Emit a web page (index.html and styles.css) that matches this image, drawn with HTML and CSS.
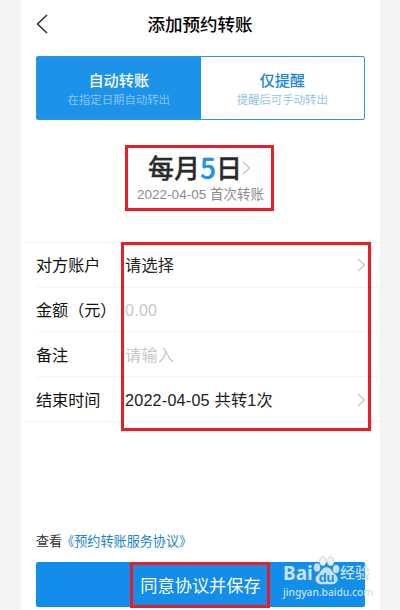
FILE: index.html
```
<!DOCTYPE html>
<html lang="zh-CN">
  <head>
    <meta charset="utf-8">
    <title>添加预约转账</title>
    <link rel="stylesheet" href="styles.css">
  </head>
  <body>
    <div class="phone">
      <header class="header">
        <svg class="back" width="12" height="20" viewBox="0 0 12 20"><path d="M11 1L1.5 10L11 19"/></svg>
        <h1 class="title">添加预约转账</h1>
      </header>
      <div class="tabs">
        <div class="tab selected">
          <div class="tab-name">自动转账</div>
          <div class="tab-desc">在指定日期自动转出</div>
        </div>
        <div class="tab">
          <div class="tab-name">仅提醒</div>
          <div class="tab-desc">提醒后可手动转出</div>
        </div>
      </div>
      <div class="date">
        <div class="day">每月<span class="num">5</span>日<svg class="arrow" width="9" height="14" viewBox="0 0 9 14"><path d="M1 1L7.5 7L1 13"/></svg></div>
        <div class="first">2022-04-05 首次转账</div>
      </div>
      <div class="form">
        <div class="row">
          <div class="label">对方账户</div>
          <div class="value">请选择</div>
          <svg class="arrow" width="9" height="14" viewBox="0 0 9 14"><path d="M1 1L7.5 7L1 13"/></svg>
        </div>
        <div class="row">
          <div class="label">金额（元）</div>
          <div class="value empty">0.00</div>
        </div>
        <div class="row">
          <div class="label">备注</div>
          <div class="value empty">请输入</div>
        </div>
        <div class="row">
          <div class="label">结束时间</div>
          <div class="value">2022-04-05 共转1次</div>
          <svg class="arrow" width="9" height="14" viewBox="0 0 9 14"><path d="M1 1L7.5 7L1 13"/></svg>
        </div>
      </div>
      <div class="agreement">查看<span class="link">《预约转账服务协议》</span></div>
      <div class="save">同意协议并保存</div>
    </div>

    <div class="mark mark-date"></div>
    <div class="mark mark-form"></div>
    <div class="mark mark-save"></div>

    <div class="watermark">
      <div class="logo">
        <span class="bai">Bai</span>
        <svg class="paw" width="27" height="30" viewBox="0 0 27 30">
          <ellipse cx="4" cy="12.5" rx="3" ry="4"/>
          <ellipse class="light" cx="9.8" cy="6" rx="3.1" ry="4.4"/>
          <ellipse class="light" cx="17.6" cy="6.2" rx="3.1" ry="4.4"/>
          <ellipse cx="23.1" cy="14" rx="3" ry="4"/>
          <path d="M13.5 12.5C17.5 12.5 18.5 16 21 18.5C23.5 20.7 25 22.5 24.2 25.5C23.3 29 20 29.3 13.5 29C7.5 29.3 4 29 3 25.5C2.2 22.3 4 20.5 6.3 18.3C8.5 16 9.5 12.5 13.5 12.5Z"/>
          <text x="13.6" y="27">du</text>
        </svg>
        <span class="jingyan">经验</span>
      </div>
      <div class="site">jingyan.baidu.com</div>
    </div>
  </body>
</html>
```
FILE: styles.css
```
*{
  box-sizing: border-box;
}
body{
  position: relative;
  width: 400px;
  height: 610px;
  margin: 0;
  overflow: hidden;
  background-color: #f4f4f4;
  color: #111;
  font-family: "Liberation Sans", "Noto Sans CJK SC", sans-serif;
}
.phone{
  display: flex;
  flex-direction: column;
  width: 359px;
  height: 610px;
  margin-left: 21px;
  background-color: #fff;
}
.header{
  display: flex;
  align-items: center;
  height: 48px;
  padding: 0 15px;
}
.back{
  fill: none;
  stroke: #222;
  stroke-width: 1.4;
}
.title{
  flex: 1;
  margin: 0 13px 0 0;
  padding-top: 1px;
  font-size: 17.5px;
  font-weight: 500;
  line-height: 24px;
  text-align: center;
  color: #000;
}
.tabs{
  display: flex;
  height: 64px;
  margin: 8px 15px 0;
  border: 1px solid #2f95d9;
  border-radius: 2px;
}
.tab{
  flex: 1;
  padding-top: 14px;
  text-align: center;
  color: #1a86d6;
}
.tab-name{
  font-size: 15.2px;
  font-weight: 500;
  line-height: 20px;
}
.tab-desc{
  font-size: 11.4px;
  line-height: 18px;
  color: #94c6e0;
}
.tab.selected{
  background-color: #1c92e9;
  color: #fff;
}
.tab.selected .tab-desc{
  color: #86c5f1;
}
.date{
  height: 122px;
  padding-top: 33px;
  text-align: center;
}
.day{
  display: flex;
  align-items: center;
  justify-content: center;
  height: 32px;
  padding-right: 2px;
  font-size: 26px;
  font-weight: 500;
  line-height: 32px;
  color: #2a2a2a;
  -webkit-text-stroke: .3px;
}
.num{
  width: 16px;
  margin-top: -5px;
  font-family: "Noto Sans CJK SC", sans-serif;
  font-size: 28px;
  color: #1c92e9;
}
.arrow{
  fill: none;
  stroke: #c4c4c4;
  stroke-width: 1.2;
}
.day .arrow{
  margin-top: -3px;
}
.first{
  font-size: 13.5px;
  line-height: 20px;
  color: #8c8c8c;
}
.form{
  height: 180px;
  border-top: 1px solid #f4f4f4;
  border-bottom: 1px solid #f4f4f4;
}
.row{
  display: flex;
  align-items: center;
  height: 45px;
  margin-left: 15px;
  padding-right: 14px;
  font-size: 16.2px;
  line-height: 24px;
}
.row:first-child,
.row:nth-child(2){
  height: 44px;
}
.row + .row{
  border-top: 1px solid #f5f5f5;
}
.row:nth-child(n + 3){
  padding-top: 2px;
}
.label{
  width: 89px;
  font-size: 16.1px;
  white-space: nowrap;
}
.value{
  flex: 1;
  letter-spacing: .2px;
  color: #222;
}
.empty{
  color: #c8c8c8;
}
.agreement{
  margin: 109px 15px 0;
  font-size: 13.1px;
  line-height: 22px;
  color: #333;
}
.link{
  margin-left: -1px;
  color: #1d86c8;
}
.save{
  height: 45px;
  margin: 9px 15px 0;
  border-radius: 2px;
  background-color: #128de9;
  font-size: 17.2px;
  line-height: 48px;
  text-align: center;
  color: #fff;
}

/* red frames */
.mark{
  position: absolute;
  border: 3px solid #ed1c24;
}
.mark-date{
  left: 125px;
  top: 145px;
  width: 149px;
  height: 66px;
}
.mark-form{
  left: 121px;
  top: 242px;
  width: 250px;
  height: 189px;
}
.mark-save{
  left: 130px;
  top: 562px;
  width: 140px;
  height: 46px;
}

.watermark{
  position: absolute;
  left: 283px;
  top: 555px;
  color: #c6e2f7;
}
.logo{
  display: flex;
  align-items: flex-end;
  height: 30px;
}
.bai{
  width: 30px;
  height: 22px;
  font-family: "Noto Sans", sans-serif;
  font-size: 19px;
  font-weight: bold;
  line-height: 20px;
}
.paw{
  fill: #c6e2f7;
  stroke: #d6dde3;
  stroke-width: .5;
}
.paw .light{
  fill: #eef3f7;
  stroke: #d3d9de;
  stroke-width: 1;
}
.paw text{
  fill: #128de9;
  stroke: none;
  font-size: 13px;
  font-weight: bold;
  text-anchor: middle;
}
.jingyan{
  font-size: 15px;
  font-weight: 500;
  line-height: 22px;
  height: 23px;
}
.site{
  font-family: "Noto Sans", sans-serif;
  font-size: 10.2px;
  font-weight: 500;
  line-height: 15px;
}
```
